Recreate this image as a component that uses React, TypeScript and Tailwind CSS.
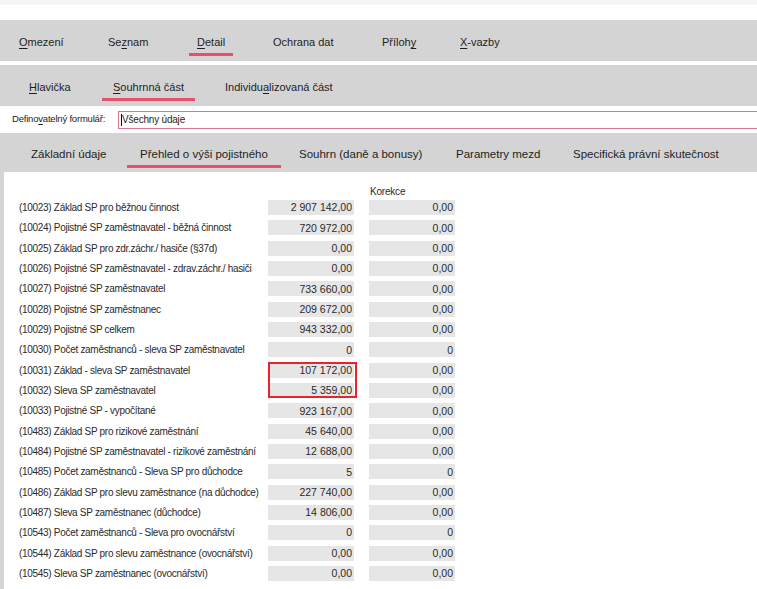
import React from 'react';

type Row = { code: string; label: string; value: string; corr: string };

const rows: Row[] = [
  { code: '10023', label: 'Základ SP pro běžnou činnost', value: '2 907 142,00', corr: '0,00' },
  { code: '10024', label: 'Pojistné SP zaměstnavatel - běžná činnost', value: '720 972,00', corr: '0,00' },
  { code: '10025', label: 'Základ SP pro zdr.záchr./ hasiče (§37d)', value: '0,00', corr: '0,00' },
  { code: '10026', label: 'Pojistné SP zaměstnavatel - zdrav.záchr./ hasiči', value: '0,00', corr: '0,00' },
  { code: '10027', label: 'Pojistné SP zaměstnavatel', value: '733 660,00', corr: '0,00' },
  { code: '10028', label: 'Pojistné SP zaměstnanec', value: '209 672,00', corr: '0,00' },
  { code: '10029', label: 'Pojistné SP celkem', value: '943 332,00', corr: '0,00' },
  { code: '10030', label: 'Počet zaměstnanců - sleva SP zaměstnavatel', value: '0', corr: '0' },
  { code: '10031', label: 'Základ - sleva SP zaměstnavatel', value: '107 172,00', corr: '0,00' },
  { code: '10032', label: 'Sleva SP zaměstnavatel', value: '5 359,00', corr: '0,00' },
  { code: '10033', label: 'Pojistné SP - vypočítané', value: '923 167,00', corr: '0,00' },
  { code: '10483', label: 'Základ SP pro rizikové zaměstnání', value: '45 640,00', corr: '0,00' },
  { code: '10484', label: 'Pojistné SP zaměstnavatel - rizikové zaměstnání', value: '12 688,00', corr: '0,00' },
  { code: '10485', label: 'Počet zaměstnanců - Sleva SP pro důchodce', value: '5', corr: '0' },
  { code: '10486', label: 'Základ SP pro slevu zaměstnance (na důchodce)', value: '227 740,00', corr: '0,00' },
  { code: '10487', label: 'Sleva SP zaměstnanec (důchodce)', value: '14 806,00', corr: '0,00' },
  { code: '10543', label: 'Počet zaměstnanců - Sleva pro ovocnářství', value: '0', corr: '0' },
  { code: '10544', label: 'Základ SP pro slevu zaměstnance (ovocnářství)', value: '0,00', corr: '0,00' },
  { code: '10545', label: 'Sleva SP zaměstnanec (ovocnářství)', value: '0,00', corr: '0,00' },
];

// a tab label with an optional underlined access key
function Label({ text, hot }: { text: string; hot?: number }) {
  if (hot === undefined) return <>{text}</>;
  return (
    <>
      {text.slice(0, hot)}
      <span className="underline underline-offset-2">{text[hot]}</span>
      {text.slice(hot + 1)}
    </>
  );
}

function Tab({
  text,
  hot,
  width,
  pad,
  active,
}: {
  text: string;
  hot?: number;
  width: string;
  pad: string;
  active?: boolean;
}) {
  return (
    <div className={`${width} shrink-0`}>
      <div className="inline-flex flex-col">
        <span className={`leading-[14px] whitespace-nowrap ${pad}`}>
          <Label text={text} hot={hot} />
        </span>
        <span className={`mt-[4px] h-[3px] w-full ${active ? 'bg-[#e5506f]' : 'bg-transparent'}`} />
      </div>
    </div>
  );
}

export default function App() {
  return (
    <div
      className="relative w-[757px] h-[589px] overflow-hidden bg-white text-[#1e1e1e]"
      style={{ fontFamily: '"Liberation Sans", Arial, sans-serif' }}
    >
      {/* top strip */}
      <div className="h-[5px] bg-[#f5f5f5]" />
      <div className="h-[15px] bg-white" />

      {/* main tabs */}
      <div className="h-[41px] bg-[#d4d4d4] flex items-start pt-[14px] pl-[11px] text-[11px]">
        <Tab text="Omezení" hot={0} width="w-[89px]" pad="px-[8px]" />
        <Tab text="Seznam" hot={2} width="w-[89px]" pad="px-[8px]" />
        <Tab text="Detail" hot={0} width="w-[76px]" pad="px-[8px]" active />
        <Tab text="Ochrana dat" width="w-[109px]" pad="px-[8px]" />
        <Tab text="Přílohy" hot={6} width="w-[78px]" pad="px-[8px]" />
        <Tab text="X-vazby" hot={0} width="w-[100px]" pad="px-[8px]" />
      </div>
      <div className="h-[4px] bg-white" />

      {/* sub tabs */}
      <div className="h-[41px] bg-[#d4d4d4] flex items-start pt-[14px] pl-[18px] text-[11px]">
        <Tab text="Hlavička" hot={0} width="w-[84px]" pad="px-[11px]" />
        <Tab text="Souhrnná část" hot={0} width="w-[112px]" pad="px-[11px]" active />
        <Tab text="Individualizovaná část" hot={8} width="w-[160px]" pad="px-[11px]" />
      </div>

      {/* form selector */}
      <div className="h-[27px] flex items-center pl-[12px] text-[9.5px]">
        <span className="w-[106px] shrink-0 whitespace-nowrap tracking-[-0.2px]">
          <Label text="Definovatelný formulář:" hot={6} />
        </span>
        <div className="flex-1 h-[18px] border border-r-0 border-[#d7798f] bg-white flex items-center pl-[2px] text-[10px]">
          <span className="w-px h-[12px] bg-black" />
          <span className="tracking-[-0.2px]">Všechny údaje</span>
        </div>
      </div>

      {/* section tabs */}
      <div className="h-[39px] bg-[#d4d4d4] flex items-start pt-[13px] pl-[17px] text-[11.5px]">
        <Tab text="Základní údaje" width="w-[110px]" pad="px-[14px]" />
        <Tab text="Přehled o výši pojistného" width="w-[158px]" pad="px-[13px]" active />
        <Tab text="Souhrn (daně a bonusy)" width="w-[157px]" pad="px-[14px]" />
        <Tab text="Parametry mezd" width="w-[117px]" pad="px-[14px]" />
        <Tab text="Specifická právní skutečnost" width="w-[190px]" pad="px-[14px]" />
      </div>

      {/* content */}
      <div className="flex h-[417px]">
        <div className="w-[4px] shrink-0 bg-[#d4d4d4]" />
        <div className="relative flex-1 pl-[15px] text-[10px] text-[#2a2a2a]">
          <div className="h-[25.33px] pt-[14px] leading-[12px] pl-[351px] tracking-[-0.2px]">Korekce</div>
          {rows.map((r) => (
            <div key={r.code} className="h-[20.33px] flex items-center">
              <div className="w-[249px] shrink-0 whitespace-nowrap tracking-[-0.3px]">
                ({r.code}) {r.label}
              </div>
              <div className="w-[86px] h-[15px] shrink-0 bg-[#e6e6e6] flex items-center justify-end pr-[2px] text-[10.5px] leading-none">
                {r.value}
              </div>
              <div className="w-[15px] shrink-0" />
              <div className="w-[86px] h-[15px] shrink-0 bg-[#e6e6e6] flex items-center justify-end pr-[2px] text-[10.5px] leading-none">
                {r.corr}
              </div>
            </div>
          ))}
          {/* highlight around 10031 / 10032 values */}
          <div className="absolute left-[264px] top-[190px] w-[89px] h-[36px] border-2 border-[#e8232b]" />
        </div>
      </div>
    </div>
  );
}
